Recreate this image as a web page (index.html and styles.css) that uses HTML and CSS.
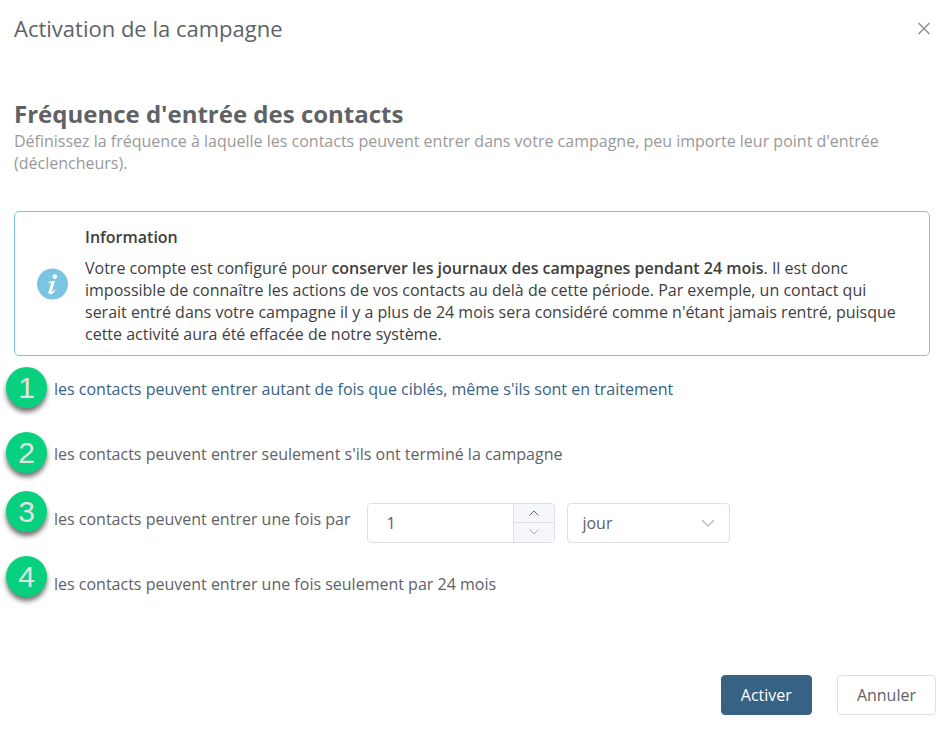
FILE: index.html
```html
<!DOCTYPE html>
<html lang="fr">
<head>
<meta charset="utf-8">
<meta name="viewport" content="width=device-width, initial-scale=1">
<title>Activation de la campagne</title>
<link rel="stylesheet" href="styles.css">
</head>
<body>
<main class="dialog">
  <header class="dialog-header">
    <h1 class="dialog-title">Activation de la campagne</h1>
    <button class="close" type="button" aria-label="Fermer">
      <svg width="14" height="14" viewBox="0 0 14 14" aria-hidden="true"><path d="M1.500 2 12.500 13M12.500 2 1.500 13" fill="none" stroke="#909399" stroke-width="1.600"/></svg>
    </button>
  </header>

  <section class="intro">
    <h2 class="section-title">Fréquence d'entrée des contacts</h2>
    <p class="section-text">Définissez la fréquence à laquelle les contacts peuvent entrer dans votre campagne, peu importe leur point d'entrée (déclencheurs).</p>
  </section>

  <aside class="notice">
    <svg class="notice-icon" width="32" height="32" viewBox="0 0 32 32" aria-hidden="true">
      <circle cx="15.500" cy="16" r="15.500" fill="#7cc5e2"/>
      <circle cx="17.900" cy="8.600" r="2.300" fill="#fff"/>
      <path d="M11.300 14.300C13.300 13.500 15.500 12.900 18 12.500L15.100 22.700C14.800 23.700 15.100 24 15.700 23.600C16.400 23.200 17.100 22.300 17.600 21.500L18.400 22C17.100 24.500 15.300 26.200 13.500 26.200C11.800 26.200 11.200 25 11.700 23.200L13.900 15.700C14.100 15 13.800 14.700 13 14.800L11.300 15.200Z" fill="#fff"/>
    </svg>
    <div class="notice-body">
      <h3 class="notice-title">Information</h3>
      <p class="notice-text">Votre compte est configuré pour <strong>conserver les journaux des campagnes pendant 24 mois</strong>. Il est donc impossible de connaître les actions de vos contacts au delà de cette période. Par exemple, un contact qui serait entré dans votre campagne il y a plus de 24 mois sera considéré comme n'étant jamais rentré, puisque cette activité aura été effacée de notre système.</p>
    </div>
  </aside>

  <form class="frequency">
    <div class="option">
      <span class="badge">1</span>
      <input class="option-radio" type="radio" name="frequency" id="f1" checked>
      <label class="option-label" for="f1">les contacts peuvent entrer autant de fois que ciblés, même s'ils sont en traitement</label>
    </div>
    <div class="option">
      <span class="badge">2</span>
      <input class="option-radio" type="radio" name="frequency" id="f2">
      <label class="option-label" for="f2">les contacts peuvent entrer seulement s'ils ont terminé la campagne</label>
    </div>
    <div class="option">
      <span class="badge badge-raised">3</span>
      <input class="option-radio" type="radio" name="frequency" id="f3">
      <label class="option-label" for="f3">les contacts peuvent entrer une fois par</label>
      <div class="period">
        <div class="stepper">
          <input class="stepper-input" type="text" inputmode="numeric" value="1" aria-label="Nombre">
          <div class="stepper-buttons">
            <button class="step" type="button" aria-label="Augmenter"><svg width="12" height="8" viewBox="0 0 12 8" aria-hidden="true"><path d="M1.500 6.500 6 2 10.500 6.500" fill="none" stroke="#606266"/></svg></button>
            <button class="step" type="button" aria-label="Diminuer"><svg width="12" height="8" viewBox="0 0 12 8" aria-hidden="true"><path d="M1.500 1.500 6 6 10.500 1.500" fill="none" stroke="#a8abb2"/></svg></button>
          </div>
        </div>
        <div class="unit">
          <select class="unit-select" aria-label="Unité"><option>jour</option></select>
          <svg class="unit-arrow" width="14" height="8" viewBox="0 0 14 8" aria-hidden="true"><path d="M1 1 7 7 13 1" fill="none" stroke="#b4b7bd" stroke-width="1.200"/></svg>
        </div>
      </div>
    </div>
    <div class="option">
      <span class="badge badge-raised">4</span>
      <input class="option-radio" type="radio" name="frequency" id="f4">
      <label class="option-label" for="f4">les contacts peuvent entrer une fois seulement par 24 mois</label>
    </div>
  </form>

  <footer class="actions">
    <button class="button button-primary" type="button">Activer</button>
    <button class="button" type="button">Annuler</button>
  </footer>
</main>
</body>
</html>
```
FILE: styles.css
```css
* {
  box-sizing: border-box;
}

body {
  margin: 0;
  background: #fff;
  color: #606266;
  font: 16px/22px "Open Sans", "Noto Sans", sans-serif;
}

h1, h2, h3, p {
  margin: 0;
}

button, input, select {
  font: inherit;
}

.dialog {
  padding: 12px 16px 16px 14px;
}

.dialog-header {
  display: flex;
  align-items: center;
  justify-content: space-between;
}

.dialog-title {
  font-size: 22px;
  line-height: 32px;
  font-weight: 400;
}

.close {
  display: flex;
  padding: 0;
  margin-right: 5px;
  border: 0;
  background: none;
}

.intro {
  margin-top: 54px;
}

.section-title {
  font-size: 24px;
  line-height: 32px;
  font-weight: 700;
}

.section-text {
  color: #999;
}

.notice {
  display: flex;
  align-items: center;
  gap: 16px;
  margin: 37px 6px 0 0;
  padding: 10px 20px 10px 22px;
  border: 1px solid #7cc5e2;
  border-radius: 5px;
  color: #404040;
}

.notice-icon {
  flex: none;
}

.notice-body {
  padding-top: 4px;
}

.notice-title {
  margin-bottom: 9px;
  font-size: 16px;
  font-weight: 600;
}

.notice-text strong {
  font-weight: 600;
}

.option {
  position: relative;
  display: flex;
  align-items: center;
  height: 65px;
  padding-left: 40px;
}

.option-radio {
  position: absolute;
  opacity: 0;
}

.option-radio:checked + .option-label {
  color: #386284;
}

.badge {
  position: absolute;
  top: 11px;
  left: -8px;
  width: 41px;
  height: 41px;
  border-radius: 50%;
  background: #07d17f;
  box-shadow: 0 4px 5px rgba(0, 0, 0, 0.55);
  color: #e2e2e2;
  font: 30px/41px "Liberation Sans", Arial, sans-serif;
  text-align: center;
}

.badge-raised {
  top: 5px;
}

.period {
  display: flex;
  gap: 12px;
  margin: 8px 0 0 17px;
}

.stepper {
  display: flex;
  width: 188px;
  height: 40px;
  border: 1px solid #dcdfe6;
  border-radius: 4px;
  overflow: hidden;
}

.stepper-input {
  flex: 1;
  min-width: 0;
  padding: 0 18px;
  border: 0;
  color: #606266;
}

.stepper-buttons {
  display: flex;
  flex-direction: column;
  width: 41px;
  border-left: 1px solid #dcdfe6;
}

.step {
  display: flex;
  flex: 1;
  align-items: center;
  justify-content: center;
  padding: 0;
  border: 0;
  background: #f5f7fa;
}

.step + .step {
  border-top: 1px solid #dcdfe6;
}

.unit {
  position: relative;
}

.unit-select {
  width: 163px;
  height: 40px;
  padding: 0 14px;
  border: 1px solid #dcdfe6;
  border-radius: 4px;
  background: #fff;
  color: #606266;
  appearance: none;
}

.unit-arrow {
  position: absolute;
  top: 16px;
  right: 15px;
  pointer-events: none;
}

.actions {
  display: flex;
  justify-content: flex-end;
  gap: 25px;
  margin-top: 59px;
}

.button {
  height: 40px;
  padding: 0 19px;
  border: 1px solid #dcdfe6;
  border-radius: 4px;
  background: #fff;
  color: #606266;
}

.button-primary {
  border-color: #386284;
  background: #386284;
  color: #fff;
}
```
